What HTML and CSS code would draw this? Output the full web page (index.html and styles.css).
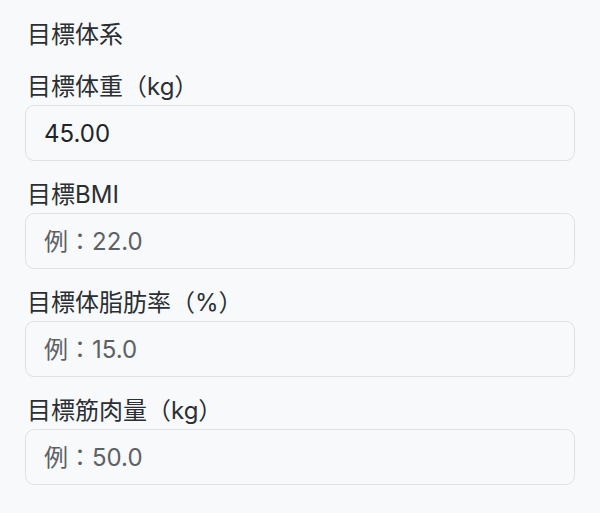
FILE: index.html
```html
<!DOCTYPE html>
<html lang="ja">
<head>
<meta charset="utf-8">
<title>目標体系</title>
<link rel="stylesheet" href="styles.css">
</head>
<body>
<section class="panel">
  <div class="title">目標体系</div>
  <div class="group">
    <label class="label" for="w">目標体重（kg）</label>
    <input class="field" id="w" type="text" value="45.00">
  </div>
  <div class="group">
    <label class="label" for="b">目標BMI</label>
    <input class="field" id="b" type="text" placeholder="例：22.0">
  </div>
  <div class="group">
    <label class="label" for="f">目標体脂肪率（%）</label>
    <input class="field" id="f" type="text" placeholder="例：15.0">
  </div>
  <div class="group">
    <label class="label" for="m">目標筋肉量（kg）</label>
    <input class="field" id="m" type="text" placeholder="例：50.0">
  </div>
</section>
</body>
</html>
```
FILE: styles.css
```css
html, body {
  margin: 0;
  padding: 0;
  background: #f8f9fa;
}
body {
  font-family: "Inter", "Noto Sans CJK JP", sans-serif;
  color: #2b2f33;
}
.panel {
  padding: 17px 25px 0 25px;
  display: flex;
  flex-direction: column;
  gap: 16px;
}
.title {
  font-size: 24px;
  line-height: 36px;
  padding-left: 2px;
}
.group {
  display: flex;
  flex-direction: column;
}
.label {
  font-size: 24px;
  line-height: 36px;
  padding-left: 2px;
}
.field {
  box-sizing: border-box;
  height: 56px;
  width: 100%;
  margin: 0;
  padding: 0 18px;
  font-family: "Inter", "Noto Sans CJK JP", sans-serif;
  font-size: 24px;
  color: #212529;
  background: #f8f9fa;
  border: 1.5px solid #dee2e6;
  border-radius: 9px;
  outline: none;
}
.field::placeholder {
  color: #5c6166;
  opacity: 1;
}
```
